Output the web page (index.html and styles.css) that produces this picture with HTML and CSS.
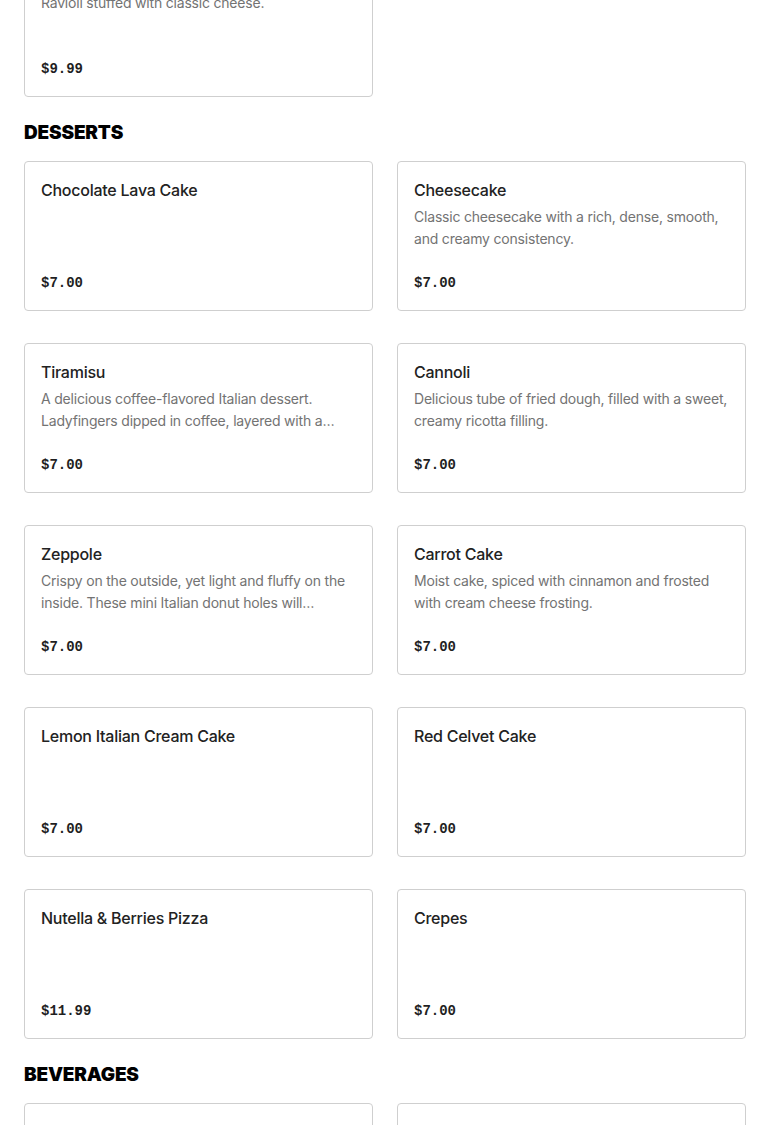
FILE: index.html
```html
<!DOCTYPE html>
<html lang="en">
<head>
<meta charset="utf-8">
<title>Menu</title>
<link rel="stylesheet" href="styles.css">
</head>
<body>
<main class="menu">
  <section class="section section-first">
    <div class="grid">
      <article class="card">
        <h3 class="card-title">Cheese Ravioli</h3>
        <p class="card-desc">Ravioli stuffed with classic cheese.</p>
        <div class="card-price">$9.99</div>
      </article>
    </div>
  </section>

  <section class="section">
    <h2 class="section-title">DESSERTS</h2>
    <div class="grid">
      <article class="card">
        <h3 class="card-title">Chocolate Lava Cake</h3>
        <div class="card-price">$7.00</div>
      </article>
      <article class="card">
        <h3 class="card-title">Cheesecake</h3>
        <p class="card-desc">Classic cheesecake with a rich, dense, smooth, and creamy consistency.</p>
        <div class="card-price">$7.00</div>
      </article>
      <article class="card">
        <h3 class="card-title">Tiramisu</h3>
        <p class="card-desc">A delicious coffee-flavored Italian dessert. Ladyfingers dipped in coffee, layered with a whipped mixture of eggs, sugar and mascarpone cheese.</p>
        <div class="card-price">$7.00</div>
      </article>
      <article class="card">
        <h3 class="card-title">Cannoli</h3>
        <p class="card-desc">Delicious tube of fried dough, filled with a sweet, creamy ricotta filling.</p>
        <div class="card-price">$7.00</div>
      </article>
      <article class="card">
        <h3 class="card-title">Zeppole</h3>
        <p class="card-desc">Crispy on the outside, yet light and fluffy on the inside. These mini Italian donut holes will<br>melt in your mouth.</p>
        <div class="card-price">$7.00</div>
      </article>
      <article class="card">
        <h3 class="card-title">Carrot Cake</h3>
        <p class="card-desc">Moist cake, spiced with cinnamon and frosted with cream cheese frosting.</p>
        <div class="card-price">$7.00</div>
      </article>
      <article class="card">
        <h3 class="card-title">Lemon Italian Cream Cake</h3>
        <div class="card-price">$7.00</div>
      </article>
      <article class="card">
        <h3 class="card-title">Red Celvet Cake</h3>
        <div class="card-price">$7.00</div>
      </article>
      <article class="card">
        <h3 class="card-title">Nutella &amp; Berries Pizza</h3>
        <div class="card-price">$11.99</div>
      </article>
      <article class="card">
        <h3 class="card-title">Crepes</h3>
        <div class="card-price">$7.00</div>
      </article>
    </div>
  </section>

  <section class="section">
    <h2 class="section-title">BEVERAGES</h2>
    <div class="grid">
      <article class="card">
        <h3 class="card-title">Soda</h3>
        <div class="card-price">$2.99</div>
      </article>
      <article class="card">
        <h3 class="card-title">Iced Tea</h3>
        <div class="card-price">$2.99</div>
      </article>
    </div>
  </section>
</main>
</body>
</html>
```

FILE: styles.css
```css
* { box-sizing: border-box; }

html, body {
  margin: 0;
  padding: 0;
  background: #ffffff;
}

body {
  font-family: "Inter", "Liberation Sans", sans-serif;
  color: #222222;
}

.menu {
  padding: 0 24px 40px;
  display: flex;
  flex-direction: column;
}

.section-first {
  margin-top: -53px;
}

.section-title {
  margin: 24px 0 16px;
  font-size: 19px;
  line-height: 24px;
  font-weight: 900;
  letter-spacing: -0.2px;
  color: #000000;
}

.grid {
  display: grid;
  grid-template-columns: 1fr 1fr;
  column-gap: 24px;
  row-gap: 32px;
}

.card {
  height: 150px;
  border: 1px solid #cfcfcf;
  border-radius: 4px;
  padding: 16px;
  display: flex;
  flex-direction: column;
  background: #ffffff;
}

.card-title {
  margin: 0;
  font-size: 16px;
  line-height: 24px;
  font-weight: 500;
  letter-spacing: -0.25px;
  color: #222222;
}

.card-desc {
  margin: 4px 0 0;
  font-size: 14px;
  line-height: 22px;
  letter-spacing: -0.2px;
  color: #737373;
  display: -webkit-box;
  -webkit-line-clamp: 2;
  -webkit-box-orient: vertical;
  overflow: hidden;
}

.card-price {
  margin-top: auto;
  padding-top: 1px;
  font-family: "Liberation Mono", "DejaVu Sans Mono", monospace;
  font-weight: 700;
  font-size: 14px;
  line-height: 22px;
  color: #1f1f1f;
}
```
